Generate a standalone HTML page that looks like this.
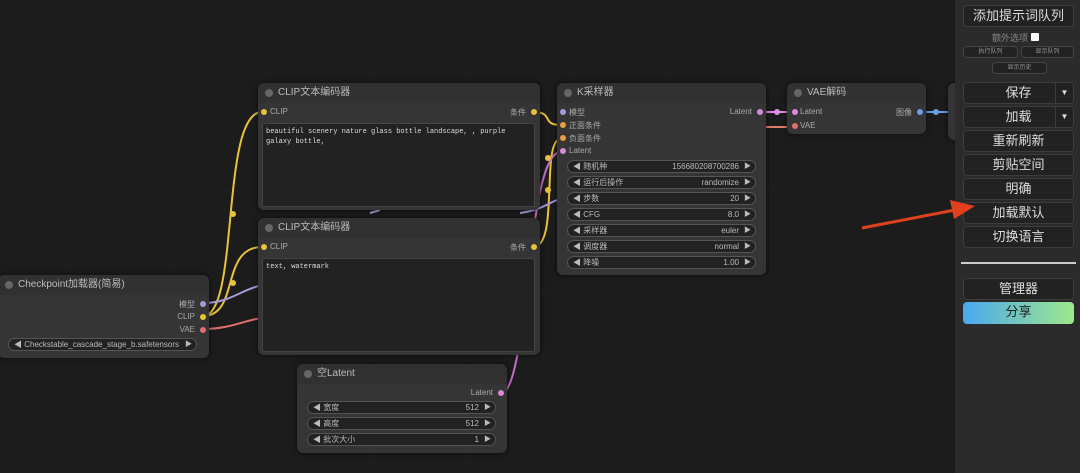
<!DOCTYPE html>
<html><head><meta charset="utf-8"><style>
*{box-sizing:border-box;margin:0;padding:0}
body{width:1080px;height:473px;overflow:hidden;background:#1c1c1c;font-family:"Liberation Sans","Noto Sans CJK SC",sans-serif;position:relative;color:#aaa;
background-image:linear-gradient(#202020 1px,transparent 1px),linear-gradient(90deg,#202020 1px,transparent 1px);background-size:100px 100px;background-position:-30px -10px}
.node{position:absolute;background:#353535;border-radius:6px;box-shadow:0 0 6px #000a}
.title{height:20px;background:#313131;border-radius:6px 6px 0 0;font-size:10px;color:#bbb;line-height:20px;padding-left:20px;position:relative}
.title:before{content:"";position:absolute;left:7px;top:6px;width:8px;height:8px;border-radius:50%;background:#666}
.s{position:absolute;font-size:8px;color:#aaa}
.d{position:absolute;width:6px;height:6px;border-radius:50%}
.ta{position:absolute;background:#222;border:1px solid #444;border-radius:2px;font-family:"Liberation Mono",monospace;font-size:7px;color:#ddd;padding:3px;line-height:10px}
.w{position:absolute;height:13px;background:#222;border:1px solid #555;border-radius:7px;font-size:8px;color:#bbb;line-height:11px;padding:0 16px 0 5px}
.w .l{float:left}.w .r{float:right}
.w:after{content:"▶";position:absolute;right:4px;top:0;font-size:7px}
.side{position:absolute;left:955px;top:0;width:125px;height:473px;background:#2b2b2b}
.b{position:absolute;left:963px;width:111px;height:22px;background:#222;border:1px solid #3d3d3d;border-radius:4px;color:#ddd;font-size:13px;text-align:center;line-height:20px}
.sb{position:absolute;height:12px;background:#222;border:1px solid #444;border-radius:4px;color:#999;font-size:6px;text-align:center;line-height:10px}
.dd{position:absolute;right:0;top:0;width:18px;height:20px;border-left:1px solid #3d3d3d;font-size:8px}
</style></head><body>
<svg style="position:absolute;left:0;top:0" width="1080" height="473">
<g fill="none" stroke-width="2">
<path d="M203 316 C240 316 220 112 262 112" stroke="#e8c23a"/>
<path d="M203 316 C240 316 220 247 262 247" stroke="#e8c23a"/>
<path d="M203 303 C230 303 240 290 262 285" stroke="#a69ad8"/>
<path d="M203 329 C230 329 245 320 262 318" stroke="#e07070"/>
<path d="M533 112 C555 112 540 125 561 125" stroke="#e8c23a"/>
<path d="M533 247 C560 247 540 139 561 139" stroke="#e8c23a"/>
<path d="M370 213 L380 210 M520 213 C540 210 545 205 557 200" stroke="#a69ad8"/>
<path d="M500 394 C530 394 525 152 561 152" stroke="#c46fc4"/>
<path d="M761 112 L792 112" stroke="#e08ee0"/>
<path d="M766 127 L792 127" stroke="#e0806a"/>
<path d="M920 112 L952 112" stroke="#6aa0e0"/>
</g>
<circle cx="233" cy="214" r="3" fill="#e8c23a"/><circle cx="233" cy="283" r="3" fill="#e8c23a"/>
<circle cx="548" cy="158" r="3" fill="#e8c23a"/><circle cx="548" cy="190" r="3" fill="#e8c23a"/>
<circle cx="777" cy="112" r="3" fill="#e08ee0"/><circle cx="936" cy="112" r="3" fill="#6aa0e0"/>
</svg>

<div class="node" style="left:258px;top:83px;width:282px;height:127px"><div class="title">CLIP文本编码器</div>
<div class="d" style="left:3px;top:26px;background:#e8c23a"></div><div class="s" style="left:12px;top:24px">CLIP</div>
<div class="s" style="right:14px;top:24px">条件</div><div class="d" style="right:3px;top:26px;background:#e8c23a"></div>
<div class="ta" style="left:4px;top:40px;width:273px;height:84px">beautiful scenery nature glass bottle landscape, , purple galaxy bottle,</div></div>

<div class="node" style="left:258px;top:218px;width:282px;height:137px"><div class="title">CLIP文本编码器</div>
<div class="d" style="left:3px;top:26px;background:#e8c23a"></div><div class="s" style="left:12px;top:24px">CLIP</div>
<div class="s" style="right:14px;top:24px">条件</div><div class="d" style="right:3px;top:26px;background:#e8c23a"></div>
<div class="ta" style="left:4px;top:40px;width:273px;height:94px">text, watermark</div></div>

<div class="node" style="left:-2px;top:275px;width:211px;height:83px"><div class="title">Checkpoint加载器(简易)</div>
<div class="s" style="right:14px;top:24px">模型</div><div class="d" style="right:3px;top:26px;background:#a69ad8"></div>
<div class="s" style="right:14px;top:37px">CLIP</div><div class="d" style="right:3px;top:39px;background:#e8c23a"></div>
<div class="s" style="right:14px;top:50px">VAE</div><div class="d" style="right:3px;top:52px;background:#e07070"></div>
<div class="w" style="left:10px;top:63px;width:189px"><span class="l">◀ Checkstable_cascade_stage_b.safetensors</span></div></div>

<div class="node" style="left:557px;top:83px;width:209px;height:192px"><div class="title">K采样器</div>
<div class="d" style="left:3px;top:26px;background:#a69ad8"></div><div class="s" style="left:12px;top:24px">模型</div>
<div class="d" style="left:3px;top:39px;background:#e8a040"></div><div class="s" style="left:12px;top:37px">正面条件</div>
<div class="d" style="left:3px;top:52px;background:#e8a040"></div><div class="s" style="left:12px;top:50px">负面条件</div>
<div class="d" style="left:3px;top:65px;background:#d88ad8"></div><div class="s" style="left:12px;top:63px">Latent</div>
<div class="s" style="right:14px;top:24px">Latent</div><div class="d" style="right:3px;top:26px;background:#d88ad8"></div>
<div class="w" style="left:10px;top:77px;width:189px"><span class="l">◀ 随机种</span><span class="r">156680208700286</span></div>
<div class="w" style="left:10px;top:93px;width:189px"><span class="l">◀ 运行后操作</span><span class="r">randomize</span></div>
<div class="w" style="left:10px;top:109px;width:189px"><span class="l">◀ 步数</span><span class="r">20</span></div>
<div class="w" style="left:10px;top:125px;width:189px"><span class="l">◀ CFG</span><span class="r">8.0</span></div>
<div class="w" style="left:10px;top:141px;width:189px"><span class="l">◀ 采样器</span><span class="r">euler</span></div>
<div class="w" style="left:10px;top:157px;width:189px"><span class="l">◀ 调度器</span><span class="r">normal</span></div>
<div class="w" style="left:10px;top:173px;width:189px"><span class="l">◀ 降噪</span><span class="r">1.00</span></div></div>

<div class="node" style="left:787px;top:83px;width:139px;height:51px"><div class="title">VAE解码</div>
<div class="d" style="left:5px;top:26px;background:#d88ad8"></div><div class="s" style="left:13px;top:24px">Latent</div>
<div class="d" style="left:5px;top:40px;background:#e07070"></div><div class="s" style="left:13px;top:38px">VAE</div>
<div class="s" style="right:14px;top:24px">图像</div><div class="d" style="right:3px;top:26px;background:#6aa0e0"></div></div>
<div class="node" style="left:948px;top:83px;width:20px;height:57px;border-radius:6px 0 0 6px"></div>

<div class="node" style="left:297px;top:364px;width:210px;height:89px"><div class="title">空Latent</div>
<div class="s" style="right:14px;top:24px">Latent</div><div class="d" style="right:3px;top:26px;background:#d88ad8"></div>
<div class="w" style="left:10px;top:37px;width:189px"><span class="l">◀ 宽度</span><span class="r">512</span></div>
<div class="w" style="left:10px;top:53px;width:189px"><span class="l">◀ 高度</span><span class="r">512</span></div>
<div class="w" style="left:10px;top:69px;width:189px"><span class="l">◀ 批次大小</span><span class="r">1</span></div></div>

<div class="side"></div>
<div class="b" style="top:5px">添加提示词队列</div>
<div style="position:absolute;left:992px;top:31px;font-size:9px;color:#888">额外选项 <span style="display:inline-block;width:8px;height:8px;background:#fff;border-radius:1px"></span></div>
<div class="sb" style="left:963px;top:46px;width:55px">执行队列</div>
<div class="sb" style="left:1021px;top:46px;width:53px">显示队列</div>
<div class="sb" style="left:992px;top:62px;width:55px">显示历史</div>
<div class="b" style="top:82px">保存<div class="dd">▼</div></div>
<div class="b" style="top:106px">加载<div class="dd">▼</div></div>
<div class="b" style="top:130px">重新刷新</div>
<div class="b" style="top:154px">剪贴空间</div>
<div class="b" style="top:178px">明确</div>
<div class="b" style="top:202px">加载默认</div>
<div class="b" style="top:226px">切换语言</div>
<div style="position:absolute;left:961px;top:262px;width:115px;height:2px;background:#ccc"></div>
<div class="b" style="top:278px">管理器</div>
<div class="b" style="top:302px;background:linear-gradient(90deg,#4aa8f0,#9ee88a);color:#222;border:none">分享</div>

<svg style="position:absolute;left:0;top:0" width="1080" height="473">
<path d="M862 228 L955 210" stroke="#e0401e" stroke-width="3"/>
<polygon points="975,206 950,200 954,219" fill="#e0401e"/>
</svg>
</body></html>
